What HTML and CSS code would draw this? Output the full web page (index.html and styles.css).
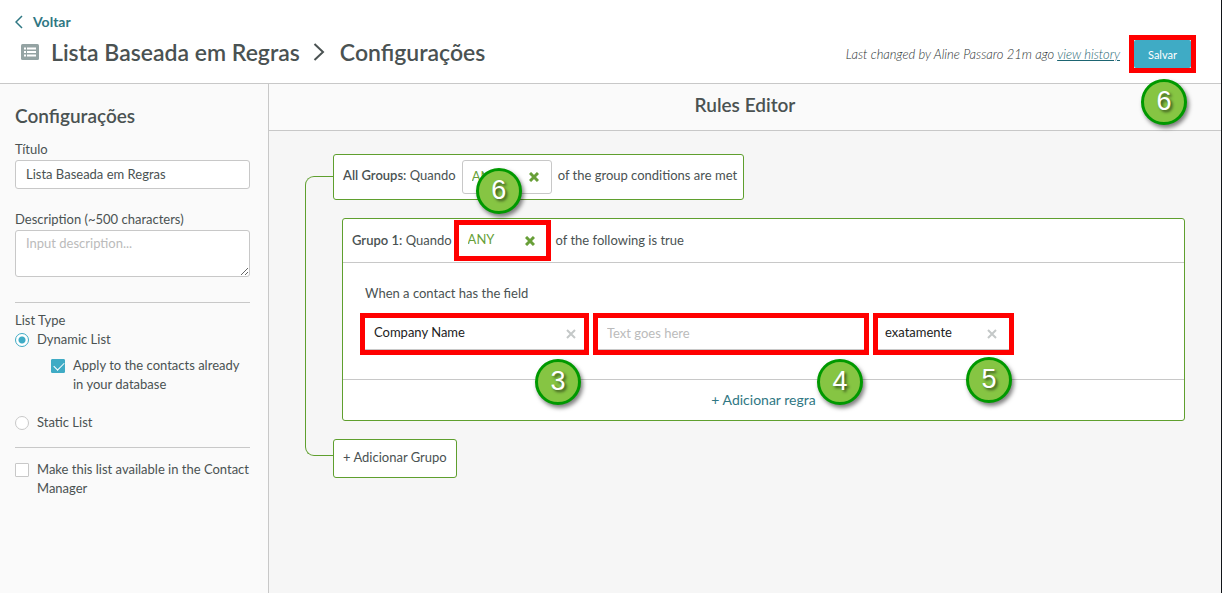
FILE: index.html
```html
<!DOCTYPE html>
<html lang="pt-BR">
<head>
    <meta charset="UTF-8">
    <meta name="viewport" content="width=device-width, initial-scale=1.0">
    <title>Lista Baseada em Regras</title>
    <link rel="stylesheet" href="styles.css">
</head>
<body>
    <header class="page-header">
        <div>
            <a class="back" href="#">
                <svg width="8" height="14" viewBox="0 0 8 14"><path d="M7 1 1 7l6 6" fill="none" stroke="currentColor" stroke-width="1.5"/></svg>
                Voltar
            </a>
            <h1 class="breadcrumb">
                <svg width="18" height="16" viewBox="0 0 18 16">
                    <rect width="18" height="16" rx="1.5" fill="#94a3a3"/>
                    <path d="M3 4.500h2M6 4.500h9M3 8h2M6 8h9M3 11.500h2M6 11.500h9" stroke="#fff" stroke-width="2"/>
                </svg>
                <span class="list-name">Lista Baseada em Regras</span>
                <svg class="separator" width="12" height="18" viewBox="0 0 12 18"><path d="m1.500 1 8.500 8-8.500 8" fill="none" stroke="currentColor" stroke-width="2"/></svg>
                <span>Configurações</span>
            </h1>
        </div>
        <div class="header-actions">
            <em>Last changed by Aline Passaro 21m ago <a href="#">view history</a></em>
            <div class="highlight">
                <button class="save" type="button">Salvar</button>
                <span class="step step-save">6</span>
            </div>
        </div>
    </header>

    <div class="content">
        <aside class="sidebar">
            <h2>Configurações</h2>
            <label class="field-label" for="title">Título</label>
            <input class="text-field" type="text" id="title" value="Lista Baseada em Regras">
            <label class="field-label" for="description">Description (~500 characters)</label>
            <textarea class="text-field description" id="description" placeholder="Input description..."></textarea>

            <fieldset class="list-type">
                <legend>List Type</legend>
                <label class="option"><input type="radio" name="type" checked> Dynamic List</label>
                <label class="option nested"><input type="checkbox" checked> Apply to the contacts already in your database</label>
                <label class="option"><input type="radio" name="type"> Static List</label>
            </fieldset>
            <div class="availability">
                <label class="option"><input type="checkbox"> Make this list available in the Contact Manager</label>
            </div>
        </aside>

        <main class="editor">
            <h2 class="editor-title">Rules Editor</h2>
            <div class="canvas">
                <div class="tree">
                    <div class="all-groups">
                        <label for="all-match"><strong>All Groups:</strong> Quando</label>
                        <div class="picker match outlined">
                            <select id="all-match"><option>ANY</option><option>ALL</option></select>
                            <button type="button" aria-label="Clear"><svg width="10" height="10" viewBox="0 0 10 10"><path d="m1 1 8 8M9 1 1 9"/></svg></button>
                            <span class="step step-match">6</span>
                        </div>
                        <span>of the group conditions are met</span>
                    </div>

                    <section class="group">
                        <div class="group-header">
                            <label for="group-match"><strong>Grupo 1:</strong> Quando</label>
                            <div class="highlight group-match">
                                <div class="picker match">
                                    <select id="group-match"><option>ANY</option><option>ALL</option></select>
                                    <button type="button" aria-label="Clear"><svg width="10" height="10" viewBox="0 0 10 10"><path d="m1 1 8 8M9 1 1 9"/></svg></button>
                                </div>
                            </div>
                            <span>of the following is true</span>
                        </div>
                        <div class="rule">
                            <label class="rule-label" for="rule-field">When a contact has the field</label>
                            <div class="rule-fields">
                                <div class="highlight rule-field">
                                    <div class="picker">
                                        <select id="rule-field"><option>Company Name</option></select>
                                        <button type="button" aria-label="Clear"><svg width="10" height="10" viewBox="0 0 10 10"><path d="m1 1 8 8M9 1 1 9"/></svg></button>
                                    </div>
                                    <span class="step step-field">3</span>
                                </div>
                                <div class="highlight rule-value">
                                    <input class="value-input" type="text" aria-label="Value" placeholder="Text goes here">
                                    <span class="step step-value">4</span>
                                </div>
                                <div class="highlight rule-operator">
                                    <div class="picker operator">
                                        <select aria-label="Operator"><option>exatamente</option></select>
                                        <button type="button" aria-label="Clear"><svg width="10" height="10" viewBox="0 0 10 10"><path d="m1 1 8 8M9 1 1 9"/></svg></button>
                                    </div>
                                    <span class="step step-operator">5</span>
                                </div>
                            </div>
                        </div>
                        <button class="add-rule" type="button">+ Adicionar regra</button>
                    </section>

                    <button class="add-group" type="button">+ Adicionar Grupo</button>
                </div>
            </div>
        </main>
    </div>
</body>
</html>
```
FILE: styles.css
```css
* {
    box-sizing: border-box;
}
body {
    margin: 0;
    min-height: 100vh;
    display: flex;
    flex-direction: column;
    border-right: 1px solid #111418;
    font-family: Lato, "Liberation Sans", sans-serif;
    font-size: 13px;
    line-height: 19px;
    color: #4a5252;
}
button, input, select, textarea {
    font: inherit;
    color: inherit;
}
button {
    cursor: pointer;
}
h1, h2 {
    margin: 0;
    font-weight: 600;
}
strong {
    font-weight: 600;
}

/* header */
.page-header {
    display: flex;
    justify-content: space-between;
    padding: 12px 25px 15px 15px;
    border-bottom: 1px solid #c8c8c8;
    background-color: #fff;
}
.back {
    display: flex;
    align-items: center;
    gap: 10px;
    font-size: 14px;
    font-weight: 700;
    line-height: 20px;
    color: #2f7783;
    text-decoration: none;
}
.breadcrumb {
    display: flex;
    align-items: center;
    margin-top: 4px;
    padding-left: 6px;
    font-size: 23px;
    line-height: 32px;
}
.list-name {
    margin-left: 12px;
}
.separator {
    margin: 0 15px 0 13px;
}
.header-actions {
    display: flex;
    align-items: center;
    align-self: flex-end;
    gap: 9px;
    margin-bottom: -5px;
}
.header-actions em {
    font-weight: 300;
    color: #2c3232;
}
.header-actions a {
    color: #1d6572;
}
.save {
    display: block;
    height: 28px;
    padding: 0 14px;
    border: none;
    border-radius: 2px;
    background-color: #3fabc5;
    font-size: 11px;
    color: #fff;
}

/* numbered walkthrough marks */
.highlight {
    position: relative;
    border: 5px solid #f00;
}
.step {
    position: absolute;
    z-index: 1;
    width: 46px;
    height: 46px;
    border: 3px solid #090;
    border-radius: 50%;
    background-color: #86c543;
    box-shadow: 2px 3px 4px rgba(0, 0, 0, 0.5);
    font-family: "Liberation Sans", Arial, sans-serif;
    font-size: 27px;
    line-height: 39px;
    text-align: center;
    color: #fff;
    text-shadow: 2px 2px 3px rgba(0, 0, 0, 0.6);
}
.step-save {
    top: 39px;
    left: 7px;
}
.step-match {
    top: 7px;
    left: 13px;
}
.step-field {
    top: 41px;
    right: 3px;
}
.step-value {
    top: 41px;
    right: 1px;
}
.step-operator {
    top: 39px;
    right: -3px;
}

.content {
    flex: 1;
    display: flex;
}

/* sidebar */
.sidebar {
    flex: 0 0 269px;
    padding: 20px 18px 20px 15px;
    border-right: 1px solid #c8c8c8;
    background-color: #fafafa;
}
.sidebar h2 {
    margin-bottom: 11px;
    font-size: 19px;
    line-height: 24px;
}
.field-label {
    display: block;
    margin-bottom: 1px;
    line-height: 20px;
}
.text-field {
    display: block;
    width: 100%;
    height: 29px;
    margin-bottom: 20px;
    padding: 0 10px 2px;
    border: 1px solid #c8c8c8;
    border-radius: 3px;
    background-color: #fff;
}
.description {
    height: 47px;
    margin-bottom: 25px;
    padding-top: 3px;
    resize: vertical;
}
::placeholder {
    color: #bbb;
    opacity: 1;
}
.list-type {
    margin: 0;
    padding: 8px 0 15px;
    border: none;
    border-top: 1px solid #c8c8c8;
}
.list-type legend {
    float: left;
    width: 100%;
    padding: 0;
}
.option {
    display: flex;
    clear: both;
    gap: 8px;
}
.nested {
    margin: 7px 0 19px 36px;
}
.option input {
    appearance: none;
    flex: none;
    width: 14px;
    height: 14px;
    margin: 3px 0 0;
    border: 1px solid #c8c8c8;
    border-radius: 1px;
    background-color: #fff;
}
.option input[type="radio"] {
    border-radius: 50%;
}
.option input[type="radio"]:checked {
    border-color: #3fabc5;
    background: radial-gradient(circle, #3fabc5 3px, #fff 4px);
}
.option input[type="checkbox"]:checked {
    border-color: #3fabc5;
    background-color: #3fabc5;
}
.option input[type="checkbox"]:checked::before {
    content: "";
    display: block;
    width: 9px;
    height: 5px;
    margin: 2px 0 0 2px;
    border: solid #fff;
    border-width: 0 0 1px 1px;
    transform: rotate(-45deg);
}
.availability {
    padding-top: 12px;
    border-top: 1px solid #c8c8c8;
}

/* rules editor */
.editor {
    flex: 1;
    min-width: 0;
    background-color: #f6f6f6;
}
.editor-title {
    padding: 9px 0 13px;
    border-bottom: 1px solid #c8c8c8;
    background-color: #fafafa;
    font-size: 19px;
    line-height: 24px;
    text-align: center;
}
.canvas {
    padding: 23px 36px;
}
.tree {
    position: relative;
    padding-left: 28px;
}
.tree::before {
    content: "";
    position: absolute;
    top: 22px;
    bottom: 22px;
    left: 0;
    width: 28px;
    border: 1px solid #5f9f2e;
    border-right: none;
    border-radius: 9px 0 0 9px;
}
.all-groups {
    display: flex;
    align-items: center;
    gap: 6px;
    width: fit-content;
    height: 46px;
    padding: 0 6px 0 9px;
    border: 1px solid #5f9f2e;
    border-radius: 3px;
    background-color: #fff;
}
.all-groups > label, .all-groups > span {
    padding-bottom: 3px;
}
.picker {
    position: relative;
    display: flex;
    align-items: center;
    height: 32px;
    padding: 0 8px 0 9px;
    border-bottom: 1px solid #c8c8c8;
    color: #222;
}
.picker select {
    appearance: none;
    flex: 1;
    min-width: 0;
    padding: 0 0 2px;
    border: none;
    background: none;
}
.picker button {
    display: flex;
    padding: 0;
    border: none;
    background: none;
    color: #c4c8c8;
}
.picker path {
    stroke: currentColor;
    stroke-width: 2;
}
.operator {
    padding: 0 12px 0 7px;
}
.match, .match button {
    color: #689f38;
}
.match {
    height: 31px;
    padding-right: 11px;
    border: none;
}
.match path {
    stroke-width: 3;
}
.outlined {
    width: 90px;
    height: 34px;
    padding-right: 12px;
    border: 1px solid #c8c8c8;
    border-radius: 3px;
}
.group {
    margin: 18px 0 18px 9px;
    border: 1px solid #5f9f2e;
    border-radius: 3px;
    background-color: #fff;
}
.group-header {
    display: flex;
    align-items: center;
    gap: 2px;
    height: 44px;
    padding: 0 9px;
    border-bottom: 1px solid #c8c8c8;
}
.group-header > label, .group-header > span {
    padding-bottom: 1px;
}
.group-header > span {
    padding-left: 3px;
}
.group-match {
    width: 97px;
}
.rule {
    padding: 21px 17px 24px;
}
.rule-label {
    display: block;
    margin-bottom: 10px;
    padding-left: 5px;
}
.rule-fields {
    display: flex;
    gap: 4px;
}
.rule-field {
    flex: 0 1 229px;
}
.rule-value {
    flex: 0 1 276px;
}
.rule-operator {
    flex: 0 1 141px;
}
.value-input {
    display: block;
    width: 100%;
    height: 32px;
    padding: 0 9px 2px;
    border: none;
    border-bottom: 1px solid #c8c8c8;
}
.add-rule {
    display: block;
    width: 100%;
    height: 41px;
    padding: 0 0 2px;
    border: none;
    border-top: 1px solid #c8c8c8;
    background: none;
    font-size: 14px;
    color: #2f7783;
}
.add-group {
    display: block;
    height: 39px;
    padding: 0 9px 2px;
    border: 1px solid #5f9f2e;
    border-radius: 3px;
    background-color: #fff;
}
```
